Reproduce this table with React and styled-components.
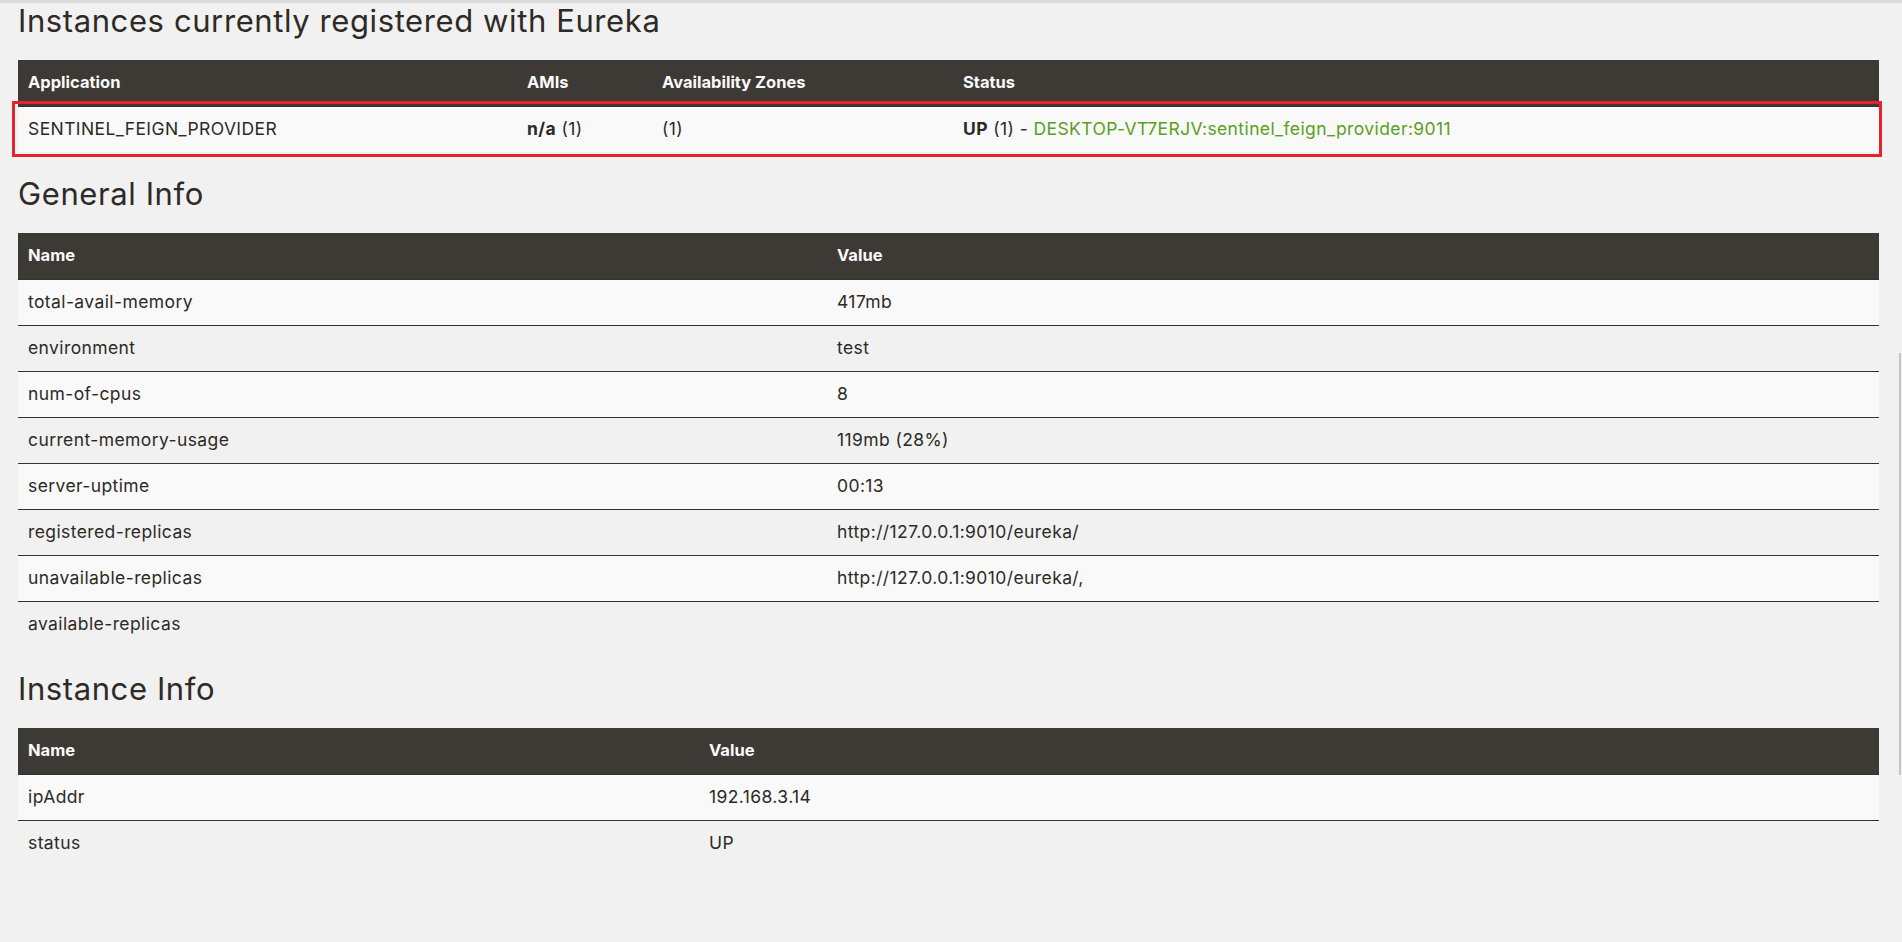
import styled, { createGlobalStyle } from "styled-components";

const GlobalStyle = createGlobalStyle`
  html, body {
    margin: 0;
    padding: 0;
    background: #f1f1f1;
  }
  body {
    font-family: Inter, "Open Sans", sans-serif;
    color: #2d2a26;
  }
`;

const Page = styled.div`
  min-height: 942px;
  box-sizing: border-box;
  border-top: 3px solid #dcdcdc;
  padding: 0 23px 0 18px;
`;

const Heading = styled.h1`
  margin: ${(p) => p.$top || 0}px 0 21px;
  font-size: 31px;
  line-height: 36px;
  letter-spacing: 0.6px;
  font-weight: 400;
  color: #2e2a26;
`;

const TableWrap = styled.div`
  position: relative;
`;

const Table = styled.table`
  width: 100%;
  border-collapse: collapse;
  table-layout: fixed;
  font-size: 17.5px;
  letter-spacing: 0.4px;
`;

const Th = styled.th`
  box-sizing: border-box;
  background: #3d3a35;
  color: #fafafa;
  font-size: 16.5px;
  letter-spacing: 0;
  font-weight: 700;
  text-align: left;
  padding: 9px 10px 11px;
  line-height: 26px;
  width: ${(p) => (p.$w ? `${p.$w}px` : "auto")};
`;

const Row = styled.tr`
  background: ${(p) => (p.$odd ? "#f9f9f9" : "transparent")};
`;

const Td = styled.td`
  border-top: 1px solid #333;
  padding: 9px 10px 11px;
  line-height: 25px;
  white-space: nowrap;
  overflow: hidden;
`;

const Strong = styled.b`
  font-weight: 700;
`;

const Link = styled.a`
  color: #5b9f22;
  text-decoration: none;
`;

const Highlight = styled.div`
  position: absolute;
  top: 41px;
  left: -6px;
  right: -3px;
  height: 56px;
  box-sizing: border-box;
  border: 3px solid #e8222c;
  pointer-events: none;
`;

const ScrollEdge = styled.div`
  position: fixed;
  right: 1px;
  top: 353px;
  width: 2px;
  height: 422px;
  background: #c4c4c4;
`;

const general = [
  ["total-avail-memory", "417mb"],
  ["environment", "test"],
  ["num-of-cpus", "8"],
  ["current-memory-usage", "119mb (28%)"],
  ["server-uptime", "00:13"],
  ["registered-replicas", "http://127.0.0.1:9010/eureka/"],
  ["unavailable-replicas", "http://127.0.0.1:9010/eureka/,"],
  ["available-replicas", ""],
];

const instance = [
  ["ipAddr", "192.168.3.14"],
  ["status", "UP"],
];

const InfoTable = ({ rows, nameWidth }) => (
  <Table>
    <thead>
      <tr>
        <Th $w={nameWidth}>Name</Th>
        <Th>Value</Th>
      </tr>
    </thead>
    <tbody>
      {rows.map(([name, value], i) => (
        <Row key={name} $odd={i % 2 === 0}>
          <Td>{name}</Td>
          <Td>{value}</Td>
        </Row>
      ))}
    </tbody>
  </Table>
);

const App = () => {
  return (
    <>
      <GlobalStyle />
      <Page>
        <Heading>Instances currently registered with Eureka</Heading>
        <TableWrap>
          <Table>
            <thead>
              <tr>
                <Th $w={499}>Application</Th>
                <Th $w={135}>AMIs</Th>
                <Th $w={301}>Availability Zones</Th>
                <Th>Status</Th>
              </tr>
            </thead>
            <tbody>
              <Row $odd>
                <Td>SENTINEL_FEIGN_PROVIDER</Td>
                <Td>
                  <Strong>n/a</Strong> (1)
                </Td>
                <Td>(1)</Td>
                <Td>
                  <Strong>UP</Strong> (1) -{" "}
                  <Link href="#">DESKTOP-VT7ERJV:sentinel_feign_provider:9011</Link>
                </Td>
              </Row>
            </tbody>
          </Table>
          <Highlight />
        </TableWrap>

        <Heading $top={24}>General Info</Heading>
        <InfoTable rows={general} nameWidth={809} />

        <Heading $top={24}>Instance Info</Heading>
        <InfoTable rows={instance} nameWidth={681} />
      </Page>
      <ScrollEdge />
    </>
  );
};

export default App;
